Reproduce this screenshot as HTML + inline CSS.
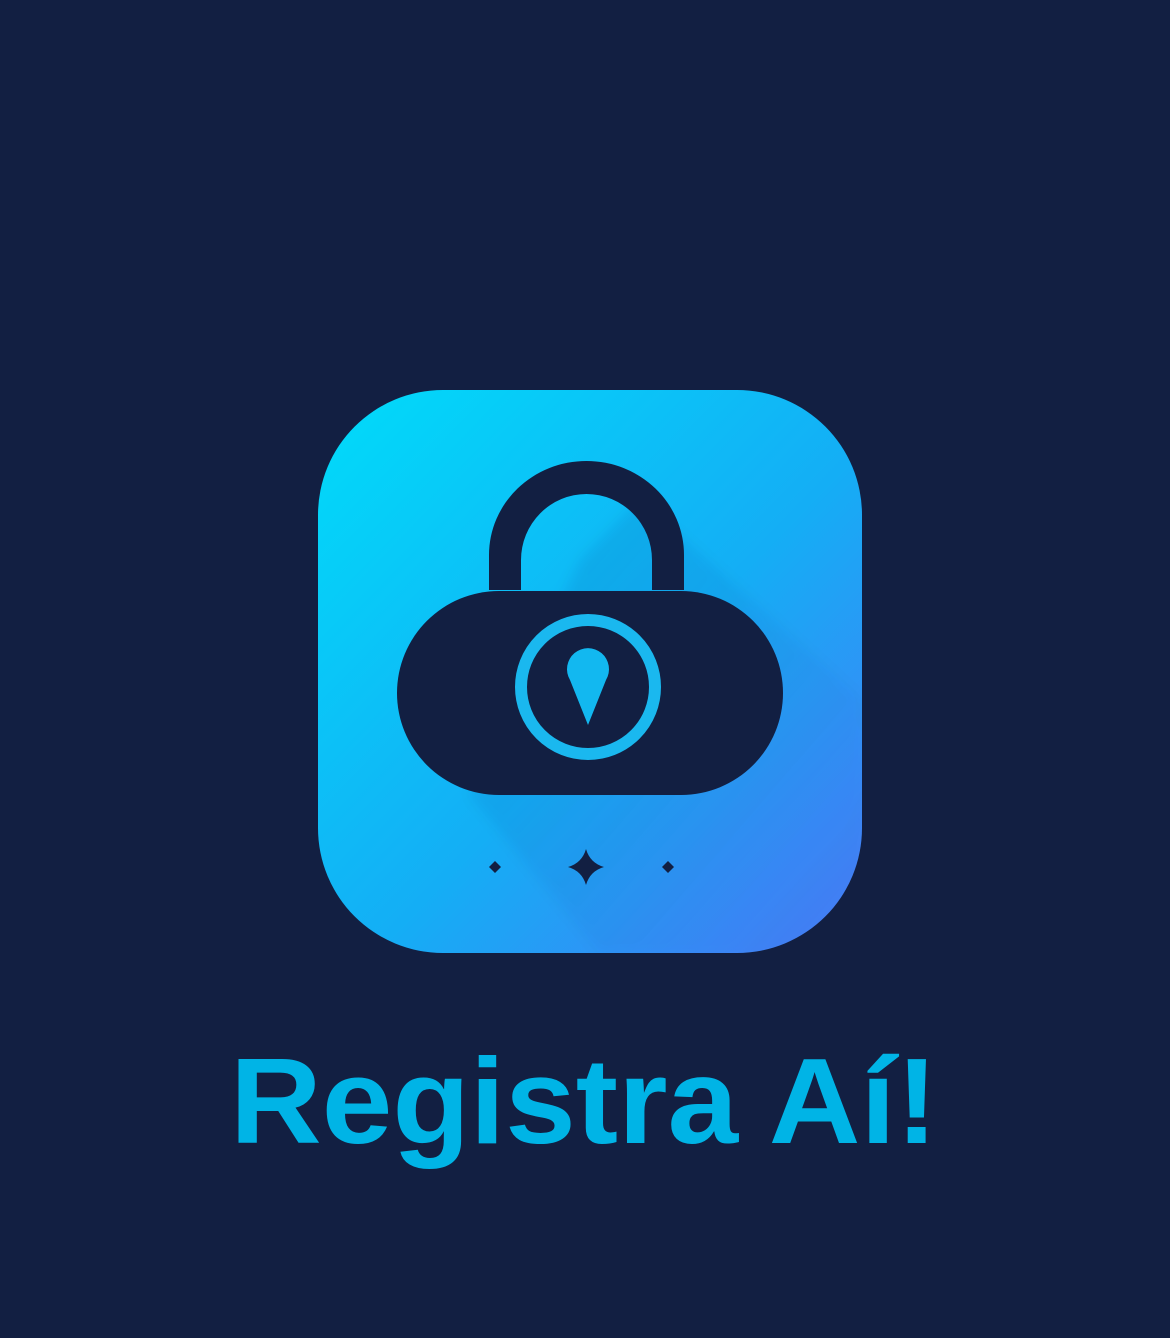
<!DOCTYPE html>
<html><head><meta charset="utf-8"><style>
html,body{margin:0;padding:0;background:#121f42;width:1170px;height:1338px;overflow:hidden}
</style></head><body>
<svg width="1170" height="1338" viewBox="0 0 1170 1338" xmlns="http://www.w3.org/2000/svg">
<defs>
<linearGradient id="g" x1="0" y1="0" x2="1" y2="1">
<stop offset="0" stop-color="#00dcfa"/>
<stop offset="0.55" stop-color="#14aef5"/>
<stop offset="1" stop-color="#4a78f6"/>
</linearGradient>
<linearGradient id="sh" x1="0" y1="0" x2="1" y2="1">
<stop offset="0" stop-color="#0a2a60" stop-opacity="0.10"/>
<stop offset="1" stop-color="#0a2a60" stop-opacity="0"/>
</linearGradient>
<filter id="b"><feGaussianBlur stdDeviation="6"/></filter>
<clipPath id="c"><rect x="318" y="390" width="544" height="563" rx="125"/></clipPath>
</defs>
<rect x="318" y="390" width="544" height="563" rx="125" fill="url(#g)"/>
<g clip-path="url(#c)">
<path d="M580 560 L640 500 L862 700 L862 953 L600 953 L470 795 Z" fill="url(#sh)" filter="url(#b)"/>
</g>
<path d="M489 590 V555 A97.5 94 0 0 1 684 555 V590 H652 V560 A65.5 66 0 0 0 521 560 V590 Z" fill="#121f42"/>
<rect x="397" y="591" width="386" height="204" rx="102" fill="#121f42"/>
<circle cx="588" cy="687" r="67" fill="none" stroke="#1ab8ef" stroke-width="12"/>
<path d="M588 725 L570 680 A21 21 0 1 1 606 680 Z" fill="#12b8f0"/>
<path d="M495 861 L501 867 L495 873 L489 867 Z" fill="#121f42"/>
<path d="M668 861 L674 867 L668 873 L662 867 Z" fill="#121f42"/>
<path d="M586 849 Q590 863 604 867 Q590 871 586 885 Q582 871 568 867 Q582 863 586 849 Z" fill="#121f42"/>
<text x="230" y="1143" font-family="Liberation Sans, sans-serif" font-weight="bold" font-size="122" fill="#00b4e6" textLength="708" lengthAdjust="spacingAndGlyphs">Registra Aí!</text>
</svg>
</body></html>
